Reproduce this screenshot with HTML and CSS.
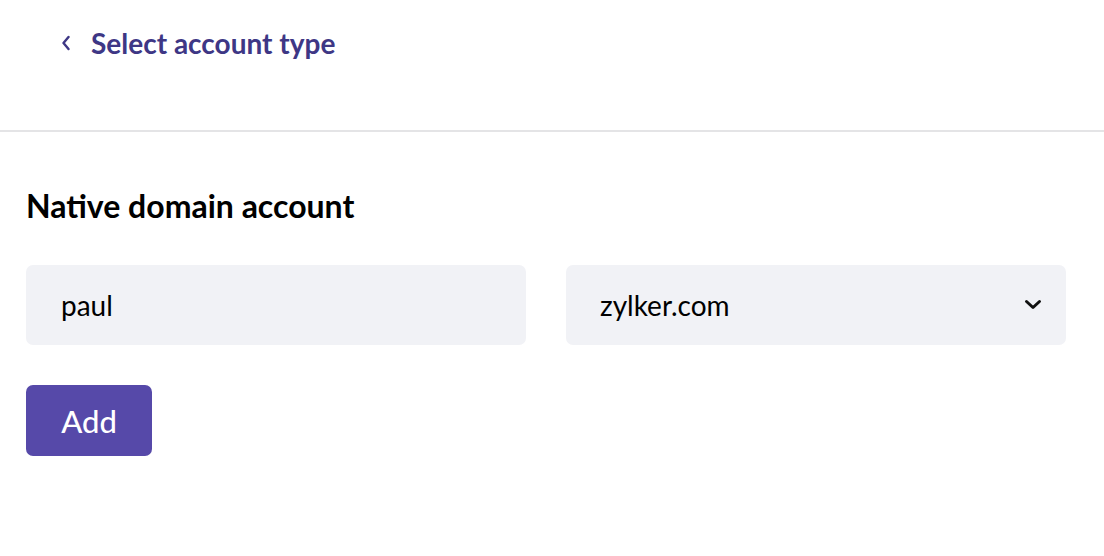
FILE: index.html
```html
<!DOCTYPE html>
<html>
<head>
<meta charset="utf-8">
<link rel="stylesheet" href="styles.css">
</head>
<body>
<header class="topbar">
  <a class="back" href="#">
    <svg class="back-icon" width="8" height="16" viewBox="0 0 8 16"><path d="M6.5 2 L1.5 8 L6.5 14" fill="none" stroke="currentColor" stroke-width="2.4" stroke-linecap="round" stroke-linejoin="round"/></svg>
    <span>Select account type</span>
  </a>
</header>
<main class="content">
  <h2 class="title">Native domain account</h2>
  <div class="fields">
    <div class="field">paul</div>
    <div class="field select">
      <span>zylker.com</span>
      <svg class="chev" width="18" height="12" viewBox="0 0 18 12"><path d="M2.5 2.5 L9 8.5 L15.5 2.5" fill="none" stroke="currentColor" stroke-width="3" stroke-linecap="round" stroke-linejoin="round"/></svg>
    </div>
  </div>
  <button class="add">Add</button>
</main>
</body>
</html>
```
FILE: styles.css
```css
html, body { margin: 0; padding: 0; background: #fff; }
body { font-family: Lato, "Open Sans", sans-serif; color: #000; }
.topbar {
  height: 132px;
  border-bottom: 2px solid #e4e4e6;
  box-sizing: border-box;
  padding: 26px 0 0 62px;
}
.back {
  display: inline-flex;
  align-items: center;
  gap: 21px;
  color: #3e3785;
  text-decoration: none;
  font-weight: 700;
  font-size: 28px;
}
.content { padding: 0 26px; }
.title {
  margin: 52px 0 0;
  font-size: 32px;
  font-weight: 700;
  line-height: 44px;
}
.fields {
  display: grid;
  grid-template-columns: 1fr 1fr;
  gap: 40px;
  margin-top: 37px;
  width: 1040px;
}
.field {
  height: 80px;
  background: #f1f2f6;
  border-radius: 7px;
  display: flex;
  align-items: center;
  padding: 0 35px;
  font-size: 28px;
  box-sizing: border-box;
}
.select { justify-content: space-between; padding: 0 24px 0 34px; }
.chev { color: #111; }
.add {
  display: block;
  margin-top: 40px;
  width: 126px;
  height: 71px;
  border: 0;
  border-radius: 7px;
  background: #5649a9;
  color: #fff;
  font-family: Lato, sans-serif;
  font-size: 31px;
  font-weight: 500;
  padding: 0;
}
```
